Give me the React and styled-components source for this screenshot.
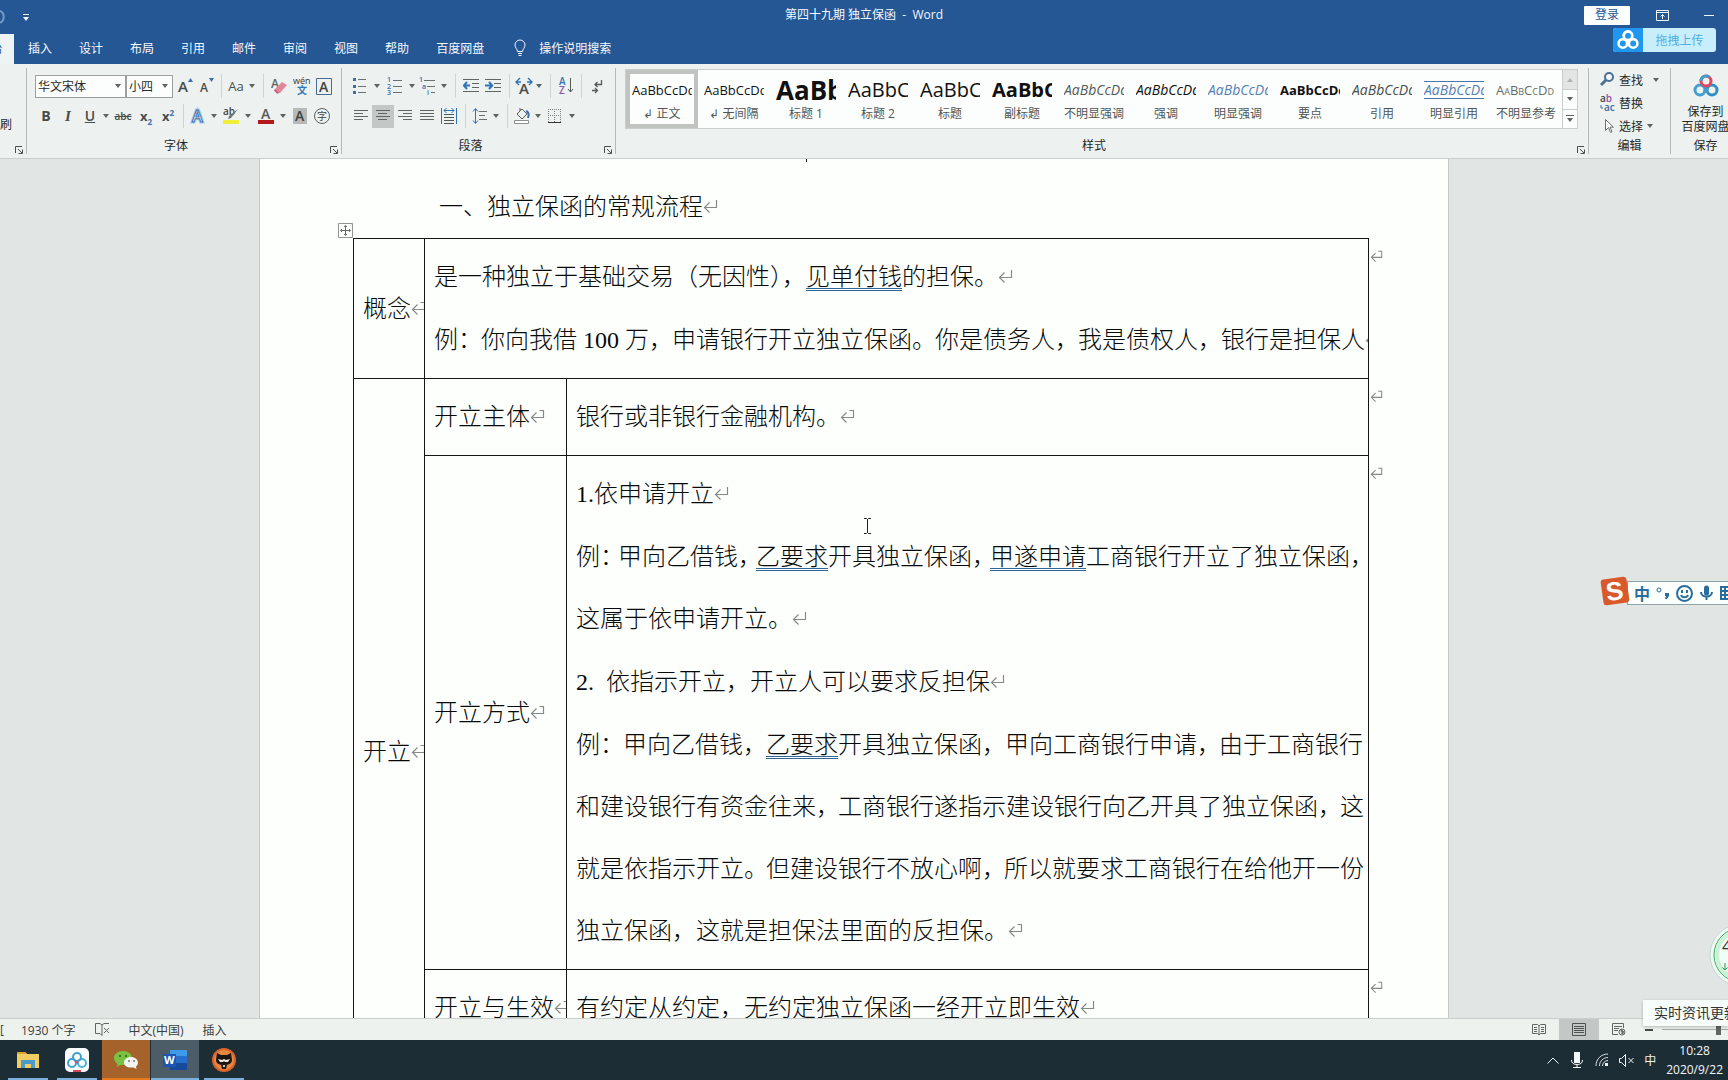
import React from "react";
import styled, { createGlobalStyle, css } from "styled-components";

const ui = `"Open Sans", "Noto Sans CJK SC", sans-serif`;

const GlobalStyle = createGlobalStyle`
  * {
    box-sizing: border-box;
  }
  body {
    margin: 0;
    overflow: hidden;
    font-family: ${ui};
    font-size: 12px;
    color: #262a29;
  }
  button,
  select,
  input {
    font: inherit;
    color: inherit;
  }
  button {
    border: 0;
    padding: 0;
    background: none;
  }
  svg {
    display: block;
    flex-shrink: 0;
  }
`;

/* ---------- small drawings ---------- */

const Ico = ({ w = 20, h = w, children, ...rest }) => (
  <svg width={w} height={h} viewBox={`0 0 ${w} ${h}`} fill="none" aria-hidden="true" {...rest}>
    {children}
  </svg>
);

const Caret = ({ color = "#5c6462" }) => (
  <Ico w={6} h={4}>
    <path d="M0 0h6L3 4z" fill={color} />
  </Ico>
);

const Launcher = () => (
  <Ico w={8} h={8} stroke="#4a504e">
    <path d="M.5 7V.5H7M3 3l4 4M7.5 3.500v4h-4" />
  </Ico>
);

// paragraph end mark, "cell" adds the hook used at the end of a table cell
const MarkSvg = styled.svg`
  && {
    display: inline-block;
    vertical-align: 1px;
  }
`;
const Mark = ({ cell, size = 15 }) => (
  <MarkSvg width={size} height={size} viewBox="0 0 15 15" fill="none" stroke="#858b88" aria-hidden="true">
    <path
      strokeWidth="1.2"
      d={cell ? "M9.500 1.500h4v7H1.500M6.500 3.500l-5 5 5 5" : "M13.500 1v7.500H1.500M6.500 3.500l-5 5 5 5"}
    />
  </MarkSvg>
);

const CloudRings = ({ size = 28, colors = ["#3f9fd0", "#e3475a", "#2f8fc4"], width = 3 }) => (
  <svg width={size} height={size} viewBox="0 0 28 28" fill="none" strokeWidth={width} aria-hidden="true">
    <circle cx="8" cy="18" r="5" stroke={colors[0]} />
    <circle cx="20" cy="18" r="5" stroke={colors[2]} />
    <circle cx="14" cy="9" r="5" stroke={colors[1]} />
    <path d="M9 9a5 5 0 0 1 8-4M12 20l4-4" stroke={colors[0]} />
  </svg>
);

const Lines = ({ rows, stroke = "#5f6664" }) => (
  <Ico w={16} h={16} stroke={stroke}>
    {rows.map(([a, b], i) => (
      <path key={i} d={`M${a} ${2.5 + i * 3}H${b}`} />
    ))}
  </Ico>
);

const Glyph = styled.span`
  font-family: ${(p) => p.$face || `"Open Sans", sans-serif`};
  font-size: ${(p) => p.$size || 14}px;
  font-weight: ${(p) => p.$weight || 600};
  font-style: ${(p) => (p.$italic ? "italic" : "normal")};
  text-decoration: ${(p) => p.$line || "none"};
  line-height: 16px;
  color: ${(p) => p.$color || "#474d4b"};
  sub,
  sup {
    font-size: 8px;
    line-height: 0;
    color: #3b6fb0;
  }
`;

/* ---------- window frame ---------- */

const Window = styled.div`
  position: relative;
  display: flex;
  flex-direction: column;
  height: 100vh;
  overflow: hidden;
  background: #e1e5e3;
`;

const TitleBar = styled.header`
  display: grid;
  grid-template-columns: 1fr auto 1fr;
  align-items: center;
  height: 34px;
  background: #265795;
  color: #f4f9fd;
`;

const DocName = styled.h1`
  margin: 0;
  font-size: 12px;
  font-weight: 400;
  line-height: 30px;
  white-space: pre;
  align-self: start;
`;

const QuickAccess = styled.div`
  display: flex;
  align-items: center;
  gap: 18px;
  button {
    display: flex;
  }
`;

const WindowButtons = styled.div`
  display: flex;
  align-items: center;
  justify-content: flex-end;
  align-self: start;
  height: 31px;
  padding-right: 14px;
  button {
    display: flex;
  }
`;

const LoginButton = styled.button`
  && {
    justify-content: center;
    width: 46px;
    height: 19px;
    margin-right: 25px;
    border-radius: 1px;
    background: #fcfefd;
    color: #265795;
    line-height: 18px;
  }
`;

const IconButton = styled.button`
  width: ${(p) => p.$w || 20}px;
  margin-right: ${(p) => p.$gap || 0}px;
  justify-content: center;
`;

const Tabs = styled.nav`
  display: flex;
  gap: 1px;
  height: 30px;
  background: #265795;
`;

const Tab = styled.button`
  display: flex;
  align-items: center;
  padding: 0 13px 2px;
  color: #f4f9fd;
  white-space: nowrap;
  ${(p) =>
    p.$active &&
    css`
      width: 14px;
      padding: 0 12px 2px 0;
      justify-content: flex-end;
      overflow: hidden;
      background: #eef3f3;
      color: #265795;
    `}
`;

const TellMe = styled.button`
  display: flex;
  align-items: center;
  gap: 11px;
  padding: 0 14px 2px;
  color: #f4f9fd;
`;

const UploadBadge = styled.button`
  position: absolute;
  top: 28px;
  right: 12px;
  display: flex;
  align-items: center;
  width: 103px;
  height: 24px;
  border-radius: 3px;
  overflow: hidden;
  background: #c8eefc;
  color: #4fb0dc;
  span {
    flex: 1;
    text-align: center;
  }
`;

const BadgeIcon = styled.i`
  display: flex;
  align-items: center;
  justify-content: center;
  width: 30px;
  height: 24px;
  background: #1f97f0;
`;

/* ---------- ribbon ---------- */

const Ribbon = styled.section`
  display: flex;
  height: 95px;
  background: #edf1ef;
  border-bottom: 1px solid #c9cfcc;
`;

const Group = styled.div`
  position: relative;
  display: flex;
  flex-direction: column;
  flex: ${(p) => (p.$w ? `0 0 ${p.$w}px` : "1 1 0")};
  min-width: 0;
  padding: ${(p) => p.$pad || "0 8px"};
  margin: 4px ${(p) => p.$bleed || 0}px 4px 0;
  border-right: 1px solid #b4bab7;
`;

const GroupLabel = styled.div`
  display: flex;
  align-items: center;
  justify-content: center;
  margin-top: auto;
  height: 16px;
  padding-right: ${(p) => (p.$launch ? 16 : 0)}px;
  padding-bottom: 2px;
  white-space: nowrap;
`;

const LaunchButton = styled.button`
  position: absolute;
  right: 3px;
  bottom: 0;
`;

const ToolRow = styled.div`
  display: flex;
  align-items: center;
  height: 24px;
  margin-top: 6px;
  white-space: nowrap;
`;

const Tool = styled.button`
  display: flex;
  align-items: center;
  justify-content: center;
  flex: 0 0 ${(p) => p.$w || 22}px;
  height: 23px;
  background: ${(p) => (p.$on ? "#c3c7c5" : "none")};
`;

const Sep = styled.i`
  flex: 0 0 ${(p) => p.$w || 10}px;
  height: 24px;
  background: linear-gradient(#d0d5d2, #d0d5d2) center / 1px 100% no-repeat;
`;

const Combo = styled.label`
  position: relative;
  display: flex;
  align-items: center;
  flex: 0 0 ${(p) => p.$w}px;
  height: 23px;
  margin-right: ${(p) => p.$gap || 0}px;
  border: 1px solid #9aa09d;
  background: #fcfefd;
  select {
    appearance: none;
    width: 100%;
    height: 21px;
    border: 0;
    padding: 0 14px 0 2px;
    background: transparent;
  }
  svg {
    position: absolute;
    right: 4px;
  }
`;

const ClipText = styled.button`
  display: flex;
  justify-content: flex-end;
  width: 12px;
  margin-top: 47px;
  overflow: hidden;
  line-height: 20px;
  white-space: nowrap;
`;

const Gallery = styled.div`
  display: flex;
  height: 60px;
  margin: 1px 10px 0 9px;
  border: 1px solid #c9cecb;
  background: #fcfefd;
`;

const StyleItem = styled.button`
  display: flex;
  flex-direction: column;
  align-items: center;
  justify-content: flex-start;
  flex: 1 1 0;
  min-width: 0;
  padding: 4px 6px 0;
  ${(p) => p.$active && "box-shadow: inset 0 0 0 4px #bfc4c1;"}
`;

const Sample = styled.span`
  display: flex;
  align-items: center;
  width: 60px;
  height: 24px;
  margin: 4px 0 3px;
  overflow: hidden;
  white-space: nowrap;
  font-size: ${(p) => p.$size || 13}px;
  font-weight: ${(p) => p.$weight || 400};
  font-style: ${(p) => (p.$italic ? "italic" : "normal")};
  font-variant: ${(p) => (p.$caps ? "small-caps" : "normal")};
  color: ${(p) => p.$color || "#111"};
  line-height: 24px;
  ${(p) =>
    p.$ruled &&
    css`
      height: 18px;
      margin: 7px 0 6px;
      border: solid #4b74a8;
      border-width: 1px 0;
    `}
`;

const StyleName = styled.span`
  line-height: 18px;
  color: #505654;
  white-space: nowrap;
  font-size: 12px;
`;

const GalleryScroll = styled.div`
  display: grid;
  grid-template-rows: 1fr 1fr 1fr;
  flex: 0 0 15px;
  border-left: 1px solid #c9cecb;
  button {
    display: flex;
    align-items: center;
    justify-content: center;
    & + button {
      border-top: 1px solid #c9cecb;
    }
    &:first-child {
      background: #e2e5e3;
    }
  }
`;

const EditButton = styled.button`
  display: flex;
  align-items: center;
  gap: 4px;
  height: 23px;
  padding-left: 11px;
  svg:last-child {
    margin-left: ${(p) => (p.$far ? 6 : 0)}px;
  }
`;

const SaveButton = styled.button`
  display: flex;
  flex-direction: column;
  align-items: center;
  padding-top: 4px;
  line-height: 15px;
  white-space: nowrap;
  svg {
    margin-bottom: 4px;
  }
`;

/* ---------- document ---------- */

const Workspace = styled.main`
  flex: 1 1 0;
  min-height: 0;
  display: flex;
  justify-content: center;
  padding-right: 20px;
  overflow: hidden;
`;

const Paper = styled.article`
  position: relative;
  flex: 0 1 1190px;
  height: max-content;
  min-height: 100%;
  padding: 17px 57px 0 93px;
  border: solid #c5cac7;
  border-width: 0 1px;
  background: #fdfffc;
  font-family: "Liberation Serif", "Noto Sans CJK SC", serif;
  font-size: 24px;
  font-weight: 300;
  line-height: 62px;
  color: #080a0a;
`;

const Heading = styled.h2`
  margin: 0;
  padding-left: 86px;
  font-size: 24px;
  font-weight: 300;
  line-height: 62px;
`;

const Stroke = styled.i`
  position: absolute;
  top: 0;
  left: 546px;
  width: 1px;
  height: 3px;
  background: #141616;
`;

const Handle = styled.span`
  position: absolute;
  top: 64px;
  left: 78px;
`;

const DocTable = styled.table`
  width: 100%;
  table-layout: fixed;
  border-collapse: collapse;
`;

const Cell = styled.td`
  height: ${(p) => p.$h || 0}px;
  padding: 7px 0 7px 9px;
  border: 1px solid #141616;
  overflow: hidden;
  white-space: pre;
  vertical-align: ${(p) => p.$v || "middle"};
`;

const EndCell = styled.td`
  padding: 9px 0 0 1px;
  vertical-align: top;
  line-height: 16px;
`;

const Para = styled.p`
  margin: 0;
  & + & {
    margin-top: 1px;
  }
`;

const Grammar = styled.span`
  text-decoration: underline double 1px #2f6699;
  text-underline-offset: 3px;
  text-decoration-skip-ink: none;
`;

// tightened full-width punctuation
const Tight = styled.span`
  font-feature-settings: "halt";
  padding-right: ${(p) => p.$room || 6}px;
`;

/* ---------- status and task bar ---------- */

const StatusBar = styled.footer`
  display: flex;
  align-items: center;
  height: 22px;
  border-top: 1px solid #c9cfcc;
  background: #eef2ef;
  color: #3a403e;
  white-space: nowrap;
`;

const StatusText = styled.span`
  margin-right: ${(p) => p.$gap || 19}px;
`;

const ViewButton = styled.button`
  display: flex;
  align-items: center;
  justify-content: center;
  width: 40px;
  height: 21px;
  background: ${(p) => (p.$on ? "#c3c7c5" : "none")};
`;

const ZoomOut = styled.button`
  width: 8px;
  height: 2px;
  margin: 0 9px 0 6px;
  && {
    background: #444a48;
  }
`;

const ZoomSlider = styled.input`
  appearance: none;
  width: 112px;
  height: 14px;
  margin: 0 -46px 0 0;
  background: linear-gradient(#a3a9a6, #a3a9a6) center / 100% 1px no-repeat;
  &::-webkit-slider-thumb {
    appearance: none;
    width: 5px;
    height: 11px;
    background: #5f6563;
  }
`;

const Spacer = styled.div`
  flex: 1;
`;

const TaskBar = styled.nav`
  display: flex;
  align-items: center;
  height: 40px;
  padding-left: 4px;
  gap: 1px;
  background: #1d2d36;
  color: #eef3f4;
`;

const Task = styled.button`
  display: flex;
  align-items: center;
  justify-content: center;
  width: 48px;
  height: 40px;
  background: ${(p) =>
    `linear-gradient(${p.$bar || "#79b1dc"}, ${p.$bar || "#79b1dc"}) bottom / ${p.$bg ? 48 : 40}px 2px no-repeat, ${
      p.$bg || "transparent"
    }`};
`;

const Tray = styled.div`
  display: flex;
  align-items: center;
  gap: 10px;
  margin-right: 9px;
`;

const Clock = styled.time`
  padding-right: 5px;
  text-align: center;
  line-height: 19px;
  color: #f4f8f8;
`;

/* ---------- things floating over the desktop ---------- */

const ImeBar = styled.div`
  position: absolute;
  top: 581px;
  right: 0;
  display: flex;
  align-items: center;
  gap: 6px;
  width: 101px;
  height: 24px;
  padding-left: 6px;
  overflow: hidden;
  border: 1px solid #8fa3ab;
  border-right: 0;
  background: #fbfffe;
  color: #2a6c9c;
  font-size: 16px;
  font-weight: 700;
`;

const ImeLogo = styled.div`
  position: absolute;
  top: 576px;
  right: 98px;
`;

const SpeedBall = styled.div`
  position: absolute;
  top: 923px;
  right: -45px;
`;

const Tip = styled.div`
  position: absolute;
  right: 0;
  bottom: 54px;
  width: 85px;
  height: 26px;
  padding-left: 11px;
  overflow: hidden;
  background: #f6fdfa;
  box-shadow: 0 1px 3px rgba(0, 0, 0, 0.25);
  font-size: 14px;
  line-height: 25px;
  white-space: nowrap;
  color: #333;
`;

const Pointer = styled.div`
  position: absolute;
  top: 518px;
  left: 864px;
`;

const tabNames = ["插入", "设计", "布局", "引用", "邮件", "审阅", "视图", "帮助", "百度网盘"];

const styleItems = [
  { name: "正文", mark: true, active: true, look: {} },
  { name: "无间隔", mark: true, look: {} },
  { name: "标题 1", text: "AaBb", look: { $size: 26, $weight: 700 } },
  { name: "标题 2", text: "AaBbC", look: { $size: 20 } },
  { name: "标题", text: "AaBbC", look: { $size: 20 } },
  { name: "副标题", text: "AaBbC", look: { $size: 20, $weight: 700 } },
  { name: "不明显强调", look: { $size: 14, $italic: true, $color: "#555b59" } },
  { name: "强调", look: { $size: 14, $italic: true } },
  { name: "明显强调", look: { $size: 14, $italic: true, $color: "#5580b4" } },
  { name: "要点", look: { $weight: 700 } },
  { name: "引用", look: { $size: 14, $italic: true, $color: "#484e4c" } },
  { name: "明显引用", look: { $size: 14, $italic: true, $color: "#5580b4", $ruled: true } },
  { name: "不明显参考", look: { $caps: true, $color: "#666c6a" } },
];

const FontGroup = () => (
  <Group $w={315}>
    <ToolRow>
      <Combo $w={91}>
        <select aria-label="字体">
          <option>华文宋体</option>
        </select>
        <Caret />
      </Combo>
      <Combo $w={47} $gap={2}>
        <select aria-label="字号">
          <option>小四</option>
        </select>
        <Caret />
      </Combo>
      <Tool $w={20} aria-label="增大字号">
        <Ico w={16} h={18}>
          <text x="1" y="15" fontSize="15" fontWeight="600" fill="#474d4b">A</text>
          <path d="M11 5h5l-2.500-4z" fill="#3b6fb0" />
        </Ico>
      </Tool>
      <Tool $w={22} aria-label="减小字号">
        <Ico w={16} h={18}>
          <text x="2" y="15" fontSize="12" fontWeight="600" fill="#474d4b">A</text>
          <path d="M11 1h5l-2.500 4z" fill="#3b6fb0" />
        </Ico>
      </Tool>
      <Sep $w={9} />
      <Tool $w={20} aria-label="更改大小写"><Glyph $size={13} $weight={400}>Aa</Glyph></Tool>
      <Tool $w={12} aria-label="大小写选项"><Caret /></Tool>
      <Sep />
      <Tool $w={22} aria-label="清除格式">
        <Ico w={16} h={18}>
          <text x="0" y="11" fontSize="12" fontWeight="600" fill="#5c6361">A</text>
          <path d="M4 12l7-7 5 3-7 8-3 .5z" fill="#e2879a" />
          <path d="M4 12l4 4-2 .5-3-3z" fill="#b9607c" />
        </Ico>
      </Tool>
      <Tool $w={24} aria-label="拼音指南">
        <Ico w={18} h={20}>
          <text x="0" y="8" fontSize="9" fill="#333">wén</text>
          <text x="4" y="18" fontSize="10" fontWeight="700" fill="#3277b5">文</text>
        </Ico>
      </Tool>
      <Tool $w={20} aria-label="字符边框">
        <Ico w={16} h={17}>
          <path d="M.5.5h15v16H.5z" stroke="#4a6b96" />
          <text x="3" y="14" fontSize="14" fontWeight="600" fill="#3d4341">A</text>
        </Ico>
      </Tool>
    </ToolRow>
    <ToolRow>
      <Tool aria-label="加粗"><Glyph $weight={700}>B</Glyph></Tool>
      <Tool aria-label="倾斜"><Glyph $italic $face={`"Liberation Serif", serif`} $size={15} $weight={700}>I</Glyph></Tool>
      <Tool aria-label="下划线"><Glyph $line="underline">U</Glyph></Tool>
      <Tool $w={10} aria-label="下划线选项"><Caret /></Tool>
      <Tool $w={24} aria-label="删除线"><Glyph $size={10} $line="line-through">abc</Glyph></Tool>
      <Tool aria-label="下标"><Glyph $weight={700} $size={13}>x<sub>2</sub></Glyph></Tool>
      <Tool aria-label="上标"><Glyph $weight={700} $size={13}>x<sup>2</sup></Glyph></Tool>
      <Sep $w={9} />
      <Tool $w={20} aria-label="文本效果">
        <Ico w={18} h={18}>
          <text x="3" y="15" fontSize="16" fontWeight="600" fill="#fff" stroke="#a9cdef" strokeWidth="3">A</text>
          <text x="3" y="15" fontSize="16" fontWeight="600" fill="#fff" stroke="#3f73ad">A</text>
        </Ico>
      </Tool>
      <Tool $w={12} aria-label="文本效果选项"><Caret /></Tool>
      <Tool $w={22} aria-label="突出显示">
        <Ico w={16} h={18}>
          <text x="0" y="8" fontSize="10" fontWeight="600" fill="#444">ab</text>
          <path d="M15 2l-7 9-3 1 1-3z" fill="#6f7673" />
          <path d="M0 13h16v4H0z" fill="#f3ee3a" />
        </Ico>
      </Tool>
      <Tool $w={12} aria-label="突出显示颜色"><Caret /></Tool>
      <Tool $w={24} aria-label="字体颜色">
        <Ico w={16} h={18}>
          <text x="3" y="12" fontSize="14" fontWeight="600" fill="#555b59">A</text>
          <path d="M0 13h16v4H0z" fill="#b3181c" />
        </Ico>
      </Tool>
      <Tool $w={10} aria-label="字体颜色选项"><Caret /></Tool>
      <Tool $w={24} aria-label="字符底纹">
        <Ico w={14} h={16}>
          <path d="M0 0h14v16H0z" fill="#b6bab8" />
          <text x="2" y="13" fontSize="14" fontWeight="600" fill="#3d4341">A</text>
        </Ico>
      </Tool>
      <Tool $w={20} aria-label="带圈字符">
        <Ico w={16} h={16}>
          <circle cx="8" cy="8" r="7.500" stroke="#5c6361" />
          <text x="3" y="12" fontSize="10" fill="#3d4341">字</text>
        </Ico>
      </Tool>
    </ToolRow>
    <GroupLabel $launch>字体</GroupLabel>
    <LaunchButton aria-label="字体设置"><Launcher /></LaunchButton>
  </Group>
);

const ParagraphGroup = () => (
  <Group $w={274}>
    <ToolRow>
      <Tool $w={20} aria-label="项目符号">
        <Ico w={16} h={18} stroke="#6a716e">
          <path d="M6 2.500h8M6 9.500h8M6 15.500h8" />
          <path d="M1 1h3v3H1zM1 8h3v3H1zM1 14h3v3H1z" fill="#3b6fb0" stroke="none" />
        </Ico>
      </Tool>
      <Tool $w={14} aria-label="项目符号选项"><Caret /></Tool>
      <Tool aria-label="编号">
        <Ico w={16} h={20} stroke="#6a716e">
          <path d="M6 4.500h9M6 10.500h9M6 16.500h9" />
          <g fill="#3b6fb0" stroke="none" fontSize="7" fontWeight="600">
            <text x="0" y="6">1</text>
            <text x="0" y="13">2</text>
            <text x="0" y="19">3</text>
          </g>
        </Ico>
      </Tool>
      <Tool $w={12} aria-label="编号选项"><Caret /></Tool>
      <Tool $w={20} aria-label="多级列表">
        <Ico w={18} h={20} stroke="#6a716e">
          <path d="M5 4.500h11M8 10.500h8M12 16.500h4" />
          <g fill="#3b6fb0" stroke="none" fontSize="7" fontWeight="600">
            <text x="0" y="6">1</text>
            <text x="3" y="13">a</text>
            <text x="8" y="19">i</text>
          </g>
        </Ico>
      </Tool>
      <Tool $w={12} aria-label="多级列表选项"><Caret /></Tool>
      <Sep />
      <Tool aria-label="减少缩进">
        <Ico w={16} h={16} stroke="#5f6664">
          <path d="M0 1.500h16M9 5.500h7M9 9.500h7M0 13.500h16" />
          <path d="M7 7.500H1M4 4L.8 7.500 4 11" stroke="#2f74b8" strokeWidth="2" />
        </Ico>
      </Tool>
      <Tool aria-label="增加缩进">
        <Ico w={16} h={16} stroke="#5f6664">
          <path d="M0 1.500h16M9 5.500h7M9 9.500h7M0 13.500h16" />
          <path d="M0 7.500h6M4 4l3.200 3.500L4 11" stroke="#2f74b8" strokeWidth="2" />
        </Ico>
      </Tool>
      <Sep />
      <Tool $w={20} aria-label="中文版式">
        <Ico w={18} h={18}>
          <text x="4" y="17" fontSize="15" fontWeight="600" fill="#474d4b">A</text>
          <path d="M5 1L1 5l3 3M1 5h5M13 1l4 4-3 3M17 5h-5" stroke="#2f74b8" strokeWidth="1.400" />
        </Ico>
      </Tool>
      <Tool $w={10} aria-label="中文版式选项"><Caret /></Tool>
      <Sep $w={12} />
      <Tool $w={20} aria-label="排序">
        <Ico w={16} h={18}>
          <text x="1" y="8" fontSize="10" fontWeight="600" fill="#3277b5">A</text>
          <text x="1" y="17" fontSize="10" fontWeight="600" fill="#8a55a5">Z</text>
          <path d="M12.500 1v14M10 12l2.500 3 2.500-3" stroke="#555b59" />
        </Ico>
      </Tool>
      <Sep />
      <Tool aria-label="显示编辑标记">
        <Ico w={12} h={16} stroke="#555b59" strokeWidth="1.300">
          <path d="M10.500 2v4.500H4M6.500 4L4 6.500 6.500 9M1 12.500h5M4 10l2.500 2.500L4 15" />
        </Ico>
      </Tool>
    </ToolRow>
    <ToolRow>
      <Tool aria-label="左对齐"><Lines rows={[[1, 15], [1, 10], [1, 15], [1, 10]]} /></Tool>
      <Tool $on aria-label="居中"><Lines rows={[[1, 15], [3, 12], [1, 15], [3, 12]]} /></Tool>
      <Tool aria-label="右对齐"><Lines rows={[[1, 15], [6, 15], [1, 15], [6, 15]]} /></Tool>
      <Tool aria-label="两端对齐"><Lines rows={[[1, 15], [1, 15], [1, 15], [1, 15]]} /></Tool>
      <Tool aria-label="分散对齐">
        <Ico w={16} h={18} stroke="#4f5654">
          <path d="M3 7.500h10M3 10.500h10M3 13.500h10M3 16.500h10" />
          <path d="M.5 1v16M15.500 1v16M3 3.500h10M5.500 1L3 3.500 5.500 6M10.500 1L13 3.500 10.500 6" stroke="#2f74b8" />
        </Ico>
      </Tool>
      <Sep />
      <Tool $w={20} aria-label="行距">
        <Ico w={16} h={18} stroke="#6a716e">
          <path d="M7 4.500h8M7 8.500h6M7 12.500h8" />
          <path d="M3.500 2v14M1 4.500L3.500 1.500 6 4.500M1 13.500l2.500 3 2.500-3" stroke="#2f74b8" />
        </Ico>
      </Tool>
      <Tool $w={12} aria-label="行距选项"><Caret /></Tool>
      <Sep />
      <Tool $w={20} aria-label="底纹">
        <Ico w={16} h={18} stroke="#555b59">
          <path d="M3 7l5-5 5 5-5 5zM6 4V1" />
          <path d="M12 4c3 1 3 4 2 7" stroke="#3b6fb0" strokeWidth="2" />
          <path d="M.5 13.500h14v3H.5z" fill="#fff" stroke="#8a908d" />
        </Ico>
      </Tool>
      <Tool $w={12} aria-label="底纹选项"><Caret /></Tool>
      <Tool aria-label="边框">
        <Ico w={14} h={14} stroke="#7b827f">
          <path d="M.5 0v13M6.500 0v13M12.500 0v13M0 .5h13M0 6.500h13" strokeDasharray="1 1" />
          <path d="M0 13.500h13" stroke="#333" />
        </Ico>
      </Tool>
      <Tool $w={12} aria-label="边框选项"><Caret /></Tool>
    </ToolRow>
    <GroupLabel $launch>段落</GroupLabel>
    <LaunchButton aria-label="段落设置"><Launcher /></LaunchButton>
  </Group>
);

const StylesGroup = () => (
  <Group $pad="0">
    <Gallery>
      {styleItems.map((item) => (
        <StyleItem key={item.name} $active={item.active}>
          <Sample {...item.look}>{item.text || "AaBbCcDd"}</Sample>
          <StyleName>
            {item.mark && "↲ "}
            {item.name}
          </StyleName>
        </StyleItem>
      ))}
      <GalleryScroll>
        <button aria-label="上一行">
          <Ico w={6} h={4}><path d="M0 4h6L3 0z" fill="#b0b5b2" /></Ico>
        </button>
        <button aria-label="下一行"><Caret /></button>
        <button aria-label="其他">
          <Ico w={8} h={8}><path d="M0 0h8v1H0zM1 3h6L4 7z" fill="#5c6462" /></Ico>
        </button>
      </GalleryScroll>
    </Gallery>
    <GroupLabel $launch>样式</GroupLabel>
    <LaunchButton aria-label="样式窗格"><Launcher /></LaunchButton>
  </Group>
);

const EditGroup = () => (
  <Group $w={82} $pad="0">
    <EditButton $far>
      <Ico w={15} h={15} stroke="#4a6f94" strokeWidth="2">
        <circle cx="9" cy="5" r="4" fill="#f3f8fa" />
        <path d="M6 8l-5 5" strokeWidth="3" />
      </Ico>
      查找
      <Caret />
    </EditButton>
    <EditButton>
      <Ico w={15} h={18}>
        <text x="0" y="8" fontSize="10" fontWeight="600" fill="#444">a<tspan fill="#9153a8">b</tspan></text>
        <text x="4" y="17" fontSize="10" fontWeight="600" fill="#3d6ca0">ac</text>
        <path d="M1 11v3h2" stroke="#3b6fb0" />
      </Ico>
      替换
    </EditButton>
    <EditButton>
      <Ico w={15} h={16} stroke="#6a716e">
        <path d="M5.500 1.500v11l3-3 2 5 1.500-.8-2-4.500h3.500z" fill="#fff" />
      </Ico>
      选择
      <Caret />
    </EditButton>
    <GroupLabel>编辑</GroupLabel>
  </Group>
);

const Header = () => (
  <>
    <TitleBar>
      <QuickAccess>
        <button aria-label="撤消">
          <Ico w={5} h={14} stroke="#7297c4"><path d="M0 1c5 2 5 9 0 12" strokeWidth="2" /></Ico>
        </button>
        <button aria-label="自定义快速访问工具栏">
          <Ico w={6} h={7}><path d="M0 0h6v1H0zM0 3h6L3 7z" fill="#eef5fb" /></Ico>
        </button>
      </QuickAccess>
      <DocName>{"第四十九期 独立保函  -  Word"}</DocName>
      <WindowButtons>
        <LoginButton>登录</LoginButton>
        <IconButton $w={14} $gap={35} aria-label="功能区显示选项">
          <Ico w={13} h={11} stroke="#eef5fb">
            <path d="M.5.5h12v10H.5zM1 2.500h11M6.500 9V4.500M4.500 6.500l2-2 2 2" />
          </Ico>
        </IconButton>
        <IconButton $w={10} aria-label="最小化">
          <Ico w={10} h={1}><path d="M0 0h10v1H0z" fill="#eef5fb" /></Ico>
        </IconButton>
      </WindowButtons>
    </TitleBar>
    <Tabs>
      <Tab $active>开始</Tab>
      {tabNames.map((name) => (
        <Tab key={name}>{name}</Tab>
      ))}
      <TellMe>
        <Ico w={16} h={18} stroke="#eef5fb">
          <path d="M5.500 12.500c0-2.500-2.500-3.500-2.500-6.500a5 5 0 0 1 10 0c0 3-2.500 4-2.500 6.500zM6 14.500h4M6.500 16.500h3" />
        </Ico>
        操作说明搜索
      </TellMe>
    </Tabs>
    <UploadBadge>
      <BadgeIcon><CloudRings size={24} colors={["#fff", "#fff", "#fff"]} /></BadgeIcon>
      <span>拖拽上传</span>
    </UploadBadge>
  </>
);

const Document = () => (
  <Workspace>
    <Paper>
      <Stroke />
      <Heading>一、独立保函的常规流程<Mark /></Heading>
      <Handle>
        <Ico w={15} h={15} stroke="#6a706e">
          <path d="M.5.5h14v14H.5z" stroke="#8f9592" fill="#fdfffc" />
          <path d="M7.500 2.500v10M2.500 7.500h10M6 4l1.500-1.500L9 4M6 11l1.500 1.500L9 11M4 6L2.500 7.500 4 9M11 6l1.500 1.500L11 9" />
        </Ico>
      </Handle>
      <DocTable>
        <colgroup>
          <col width="71" />
          <col width="142" />
          <col />
          <col width="22" />
        </colgroup>
        <tbody>
          <tr>
            <Cell>概念<Mark cell /></Cell>
            <Cell colSpan={2}>
              <Para>是一种独立于基础交易（无因性），<Grammar>见单付钱</Grammar>的担保。<Mark /></Para>
              <Para>
                例<Tight $room={11}>：</Tight>你向我借 100 万<Tight $room={11}>，</Tight>申请银行开立独立保函
                <Tight $room={11}>。</Tight>你是债务人<Tight $room={11}>，</Tight>我是债权人
                <Tight $room={11}>，</Tight>银行是担保人<Mark />
              </Para>
            </Cell>
            <EndCell><Mark cell size={13} /></EndCell>
          </tr>
          <tr>
            <Cell rowSpan={3}>开立<Mark cell /></Cell>
            <Cell>开立主体<Mark cell /></Cell>
            <Cell>银行或非银行金融机构。<Mark cell /></Cell>
            <EndCell><Mark cell size={13} /></EndCell>
          </tr>
          <tr>
            <Cell>开立方式<Mark cell /></Cell>
            <Cell>
              <Para>1.依申请开立<Mark /></Para>
              <Para>
                例<Tight>：</Tight>甲向乙借钱<Tight>，</Tight><Grammar>乙要求</Grammar>开具独立保函
                <Tight>，</Tight><Grammar>甲遂申请</Grammar>工商银行开立了独立保函<Tight>，</Tight>
                <br />
                这属于依申请开立。<Mark />
              </Para>
              <Para>{"2.  依指示开立，开立人可以要求反担保"}<Mark /></Para>
              <Para>
                例<Tight $room={11}>：</Tight>甲向乙借钱<Tight $room={11}>，</Tight><Grammar>乙要求</Grammar>开具独立保函
                <Tight $room={11}>，</Tight>甲向工商银行申请<Tight $room={10}>，</Tight>由于工商银行
                <br />
                和建设银行有资金往来<Tight $room={10}>，</Tight>工商银行遂指示建设银行向乙开具了独立保函
                <Tight $room={10}>，</Tight>这
                <br />
                就是依指示开立<Tight $room={10}>。</Tight>但建设银行不放心啊
                <Tight $room={10}>，</Tight>所以就要求工商银行在给他开一份
                <br />
                独立保函，这就是担保法里面的反担保。<Mark cell />
              </Para>
            </Cell>
            <EndCell><Mark cell size={13} /></EndCell>
          </tr>
          <tr>
            <Cell $h={156} $v="top">开立与生效<Mark cell /></Cell>
            <Cell $v="top">有约定从约定，无约定独立保函一经开立即生效<Mark /></Cell>
            <EndCell><Mark cell size={13} /></EndCell>
          </tr>
        </tbody>
      </DocTable>
    </Paper>
  </Workspace>
);

const Status = () => (
  <StatusBar>
    <StatusText $gap={17}>[</StatusText>
    <StatusText>1930 个字</StatusText>
    <Ico w={15} h={13} stroke="#5f6664">
      <path d="M7 2L5 .5H.5v10H5l2 2V2l2-1.500h5M9 5l5 5M14 5l-5 5" />
    </Ico>
    <StatusText />
    <StatusText>中文(中国)</StatusText>
    <StatusText>插入</StatusText>
    <Spacer />
    <ViewButton aria-label="阅读视图">
      <Ico w={14} h={13} stroke="#5f6664">
        <path d="M.5 1.500h5L7 3l1.500-1.500h5v9h-5L7 12l-1.500-1.500h-5zM7 3v9M2 4.500h3M2 6.500h3M2 8.500h3M9 4.500h3M9 6.500h3M9 8.500h3" />
      </Ico>
    </ViewButton>
    <ViewButton $on aria-label="页面视图">
      <Ico w={14} h={13} stroke="#4b5250">
        <path d="M.5.500h13v12H.5zM2 3.500h10M2 5.500h10M2 7.500h10M2 9.500h10" />
      </Ico>
    </ViewButton>
    <ViewButton aria-label="Web 版式视图">
      <Ico w={14} h={13} stroke="#5f6664">
        <path d="M6 11.500H.5V.5h11V5M2 3.500h8M2 5.500h5M2 7.500h4" />
        <circle cx="10" cy="9" r="3" />
        <path d="M9 7l2 2-1 2" strokeWidth="2" />
      </Ico>
    </ViewButton>
    <ZoomOut aria-label="缩小" />
    <ZoomSlider type="range" aria-label="显示比例" defaultValue="50" />
  </StatusBar>
);

const Taskbar = () => (
  <TaskBar>
    <Task aria-label="文件资源管理器">
      <Ico w={22} h={20}>
        <path d="M0 2h8l2 2h12v14H0z" fill="#f0cd62" />
        <path d="M0 2h8l2 2H0z" fill="#dba52d" />
        <path d="M4 18v-8h14v8h-4v-4H8v4z" fill="#4a9bc9" />
      </Ico>
    </Task>
    <Task aria-label="百度网盘">
      <Ico w={24} h={24}>
        <rect width="24" height="24" rx="5" fill="#fbfdfe" />
        <g strokeWidth="2">
          <circle cx="7" cy="15" r="4" stroke="#3f9fd0" />
          <circle cx="17" cy="15" r="4" stroke="#4ab3e0" />
          <circle cx="12" cy="9" r="4" stroke="#3f9fd0" />
          <path d="M10 13l3 2" stroke="#e3475a" />
        </g>
        <path d="M8 22h8v2H8z" fill="#d24a56" />
      </Ico>
    </Task>
    <Task $bg="#a6622b" $bar="#e9781d" aria-label="微信">
      <Ico w={24} h={20}>
        <path d="M9 1c5 0 9 3 9 7s-4 7-9 7l-3 0-3 2 .5-3C1 12 0 10 0 8c0-4 4-7 9-7z" fill="#7ac143" />
        <path d="M17 7c4 0 7 2.500 7 5.500 0 2-1 3-2 4l.5 2.500-3-1.500H17c-4 0-7-2-7-5S13 7 17 7z" fill="#f2f5f1" />
        <circle cx="6" cy="6" r="1" fill="#2c5a1d" />
        <circle cx="12" cy="6" r="1" fill="#2c5a1d" />
        <circle cx="15" cy="11" r="1" fill="#777" />
        <circle cx="20" cy="11" r="1" fill="#777" />
      </Ico>
    </Task>
    <Task $bg="#4c5d67" aria-label="Word">
      <Ico w={24} h={22}>
        <path d="M7 1h17v7H7z" fill="#3f9be8" />
        <path d="M7 7h17v7H7z" fill="#2570cc" />
        <path d="M7 14h17v7H7z" fill="#154a9c" />
        <path d="M0 5h13v13H0z" fill="#1c56b0" />
        <text x="1" y="15" fontSize="11" fontWeight="700" fill="#fff">W</text>
      </Ico>
    </Task>
    <Task aria-label="浏览器">
      <Ico w={24} h={24}>
        <circle cx="12" cy="12" r="12" fill="#d9652b" />
        <circle cx="12" cy="12" r="10" fill="#e98743" />
        <path d="M5 5l4 2h6l4-2 1 7c0 4-4 5-8 5s-8-1-8-5z" fill="#1b1514" />
        <path d="M6 11l4 1 2-1 2 1 4-1-2 3h-3l-1-1-1 1H8z" fill="#efe6df" />
        <path d="M9 17h6l-1 4h-4z" fill="#241a18" />
        <circle cx="12" cy="18" r="1" fill="#fff" />
      </Ico>
    </Task>
    <Spacer />
    <Tray>
      <Ico w={12} h={7} stroke="#eef3f4"><path d="M.5 6.500L6 1l5.500 5.500" /></Ico>
      <Ico w={16} h={16}>
        <path d="M5 0h6v11H5z" fill="#f4f8f8" />
        <path d="M2.500 8c0 3 2 4.500 5.500 4.500s5.500-1.500 5.500-4.500M8 13v2M4 15.500h8" stroke="#f4f8f8" />
      </Ico>
      <Ico w={14} h={14} stroke="#d7dfe1">
        <path d="M1 13C1 6 6 1 13 1M4.500 13c0-5 4-8.500 8.500-8.500M7.500 13C7.500 10 10 7.500 13 7.500" />
        <path d="M10 10h3v3h-3z" fill="#eef3f4" stroke="none" />
      </Ico>
      <Ico w={15} h={13} stroke="#eef3f4"><path d="M.5 4.500h2l4-4v12l-4-4h-2zM9.500 4l5 5M14.500 4l-5 5" /></Ico>
      <span>中</span>
    </Tray>
    <Clock>
      10:28
      <br />
      2020/9/22
    </Clock>
  </TaskBar>
);

const Floating = () => (
  <>
    <Pointer>
      <Ico w={7} h={16} stroke="#222"><path d="M0 .5h2.500L3.500 1.500 4.500.5H7M3.500 1v14M0 15.500h2.500l1-1 1 1H7" /></Ico>
    </Pointer>
    <ImeBar>
      <span>中</span>
      <Ico w={14} h={14}>
        <circle cx="3" cy="4" r="2" stroke="#2a6c9c" strokeWidth="1" />
        <path d="M9 7h4v3l-2 3H9l1-3H9z" fill="#2a6c9c" />
      </Ico>
      <Ico w={17} h={17} stroke="#2a6c9c" strokeWidth="2">
        <circle cx="8.500" cy="8.500" r="7.500" />
        <path d="M6 5v3M11 5v3M5 10c1 3 6 3 7 0" />
      </Ico>
      <Ico w={15} h={16} stroke="#2a6c9c" strokeWidth="2">
        <path d="M5 3a2.500 2.500 0 0 1 5 0v5a2.500 2.500 0 0 1-5 0z" fill="#2a6c9c" stroke="none" />
        <path d="M2 7c0 6 11 6 11 0M7.500 12v3" />
      </Ico>
      <Ico w={17} h={14} stroke="#2a6c9c" strokeWidth="2">
        <path d="M1 1h15v12H1zM1 5h15M1 9h15M5 1v12" />
      </Ico>
    </ImeBar>
    <ImeLogo>
      <Ico w={30} h={30}>
        <g transform="rotate(-8 15 15)">
          <rect x="2" y="2" width="26" height="26" rx="3" fill="#d8592b" />
          <text x="6" y="24" fontSize="26" fontWeight="700" fill="#fff" fontFamily="Liberation Sans">S</text>
        </g>
      </Ico>
    </ImeLogo>
    <SpeedBall>
      <Ico w={64} h={64}>
        <circle cx="32" cy="32" r="31" fill="#ecfaf1" stroke="#c7d6cd" />
        <circle cx="32" cy="32" r="27" fill="#f1fdf5" stroke="#43a566" strokeWidth="1" />
        <circle cx="32" cy="32" r="24" stroke="#c9f2d6" strokeWidth="4" />
        <text x="13" y="29" fontSize="17" fill="#333">4</text>
        <path d="M16 40v7M13.500 44.500L16 47l2.500-2.500" stroke="#2d9455" />
      </Ico>
    </SpeedBall>
    <Tip>实时资讯更新</Tip>
  </>
);

function App() {
  return (
    <Window>
      <GlobalStyle />
      <Header />
      <Ribbon>
        <Group $w={27} $pad="0">
          <ClipText>格式刷</ClipText>
          <LaunchButton aria-label="剪贴板"><Launcher /></LaunchButton>
        </Group>
        <FontGroup />
        <ParagraphGroup />
        <StylesGroup />
        <EditGroup />
        <Group $w={70} $pad="0" $bleed={-13}>
          <SaveButton>
            <CloudRings />
            保存到
            <br />
            <span>百度网盘</span>
          </SaveButton>
          <GroupLabel>保存</GroupLabel>
        </Group>
      </Ribbon>
      <Document />
      <Status />
      <Taskbar />
      <Floating />
    </Window>
  );
}

export default App;
